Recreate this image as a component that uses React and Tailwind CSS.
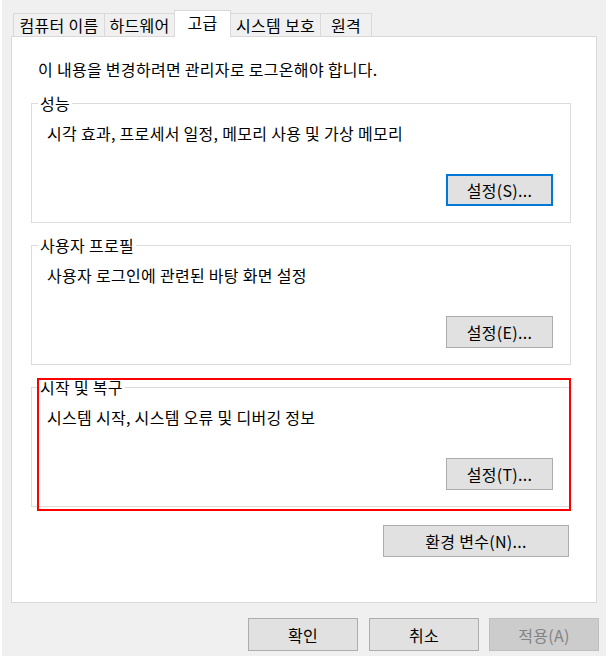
import React from 'react';

const tabs = [
  { label: '컴퓨터 이름', w: 'w-[92px]' },
  { label: '하드웨어', w: 'w-[71px]' },
  { label: '고급', w: 'w-[57px]', active: true },
  { label: '시스템 보호', w: 'w-[91px]' },
  { label: '원격', w: 'w-[52px]' },
];

function Button({ children, focused, disabled, className = '' }) {
  let look = 'bg-[#e1e1e1] border border-[#adadad] text-black';
  if (focused) look = 'bg-[#e1e1e1] border-2 border-[#0078d7] text-black';
  if (disabled) look = 'bg-[#cccccc] border border-[#bfbfbf] text-[#838383]';
  return (
    <button type="button" className={`flex items-center justify-center leading-[20px] ${look} ${className}`}>
      {children}
    </button>
  );
}

function Group({ title, desc, btn, focused }) {
  return (
    <fieldset className="w-[540px] border border-[#dcdcdc] pl-[6px] pr-[17px] pb-[16px]">
      <legend className="px-[2px] leading-[20px]">{title}</legend>
      <div className="pl-[9px] mt-[10px] leading-[20px]">{desc}</div>
      <div className="flex justify-end mt-[31px]">
        <Button focused={focused} className="w-[107px] h-[32px]">{btn}</Button>
      </div>
    </fieldset>
  );
}

export default function App() {
  return (
    <div className="w-[608px] h-[658px] bg-white font-['Noto_Sans_CJK_KR','Noto_Sans',sans-serif] text-[16px] tracking-[0.3px] text-black">
      <div className="ml-[2px] w-[604px] h-[656px] bg-[#f0f0f0] flex flex-col">
        {/* tab strip */}
        <div className="flex items-end h-[36px] pl-[11px]">
          {tabs.map((t, i) =>
            t.active ? (
              <div
                key={t.label}
                className={`${t.w} h-[27px] -mb-px -ml-px relative z-10 bg-white border border-b-0 border-[#d9d9d9] text-center pt-[1px] leading-[20px]`}
              >
                {t.label}
              </div>
            ) : (
              <div
                key={t.label}
                className={`${t.w} h-[23px] ${i > 0 ? '-ml-px' : ''} bg-[#f0f0f0] border border-b-0 border-[#d9d9d9] text-center pt-[1px] leading-[20px]`}
              >
                {t.label}
              </div>
            )
          )}
        </div>

        {/* tab panel */}
        <div className="ml-[9px] w-[586px] h-[567px] border border-[#d9d9d9] bg-white flex flex-col">
          <div className="pl-[26px] mt-[22px] leading-[20px]">이 내용을 변경하려면 관리자로 로그온해야 합니다.</div>

          <div className="ml-[19px] w-[540px] mt-[14px] flex flex-col">
            <Group
              title="성능"
              desc="시각 효과, 프로세서 일정, 메모리 사용 및 가상 메모리"
              btn="설정(S)..."
              focused
            />
            <div className="mt-[12px]">
              <Group title="사용자 프로필" desc="사용자 로그인에 관련된 바탕 화면 설정" btn="설정(E)..." />
            </div>
            <div className="mt-[12px] relative">
              <Group title="시작 및 복구" desc="시스템 시작, 시스템 오류 및 디버깅 정보" btn="설정(T)..." />
              <div className="absolute left-[6px] right-0 top-[1px] bottom-[-4px] border-2 border-[#ff0000] pointer-events-none" />
            </div>
            <div className="flex justify-end mt-[18px] pr-[2px]">
              <Button className="w-[186px] h-[32px]">환경 변수(N)...</Button>
            </div>
          </div>
        </div>

        {/* dialog buttons */}
        <div className="flex justify-end pr-[7px] mt-[15px]">
          <Button className="w-[110px] h-[33px]">확인</Button>
          <Button className="w-[110px] h-[33px] ml-[11px]">취소</Button>
          <Button disabled className="w-[110px] h-[33px] ml-[10px]">적용(A)</Button>
        </div>
      </div>
    </div>
  );
}
